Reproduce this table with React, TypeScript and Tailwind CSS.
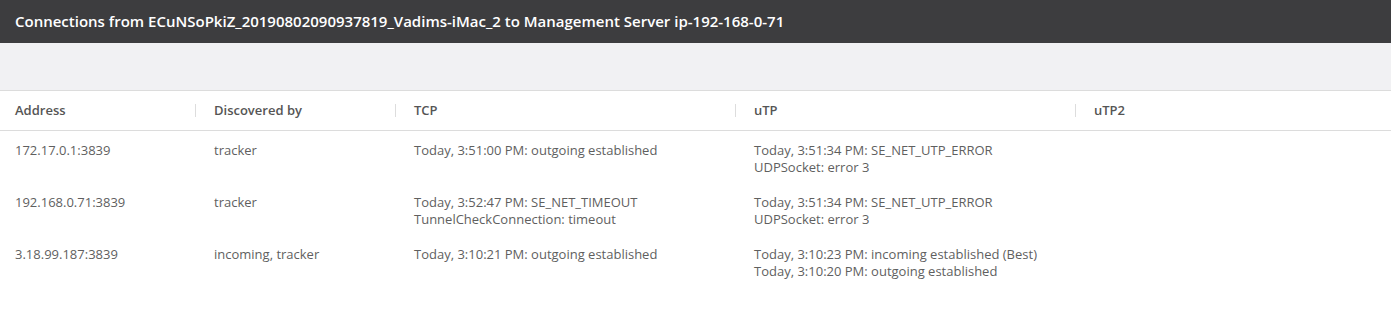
export default function App() {
  const cols = [
    { label: "Address", w: "w-[199px]" },
    { label: "Discovered by", w: "w-[200px]" },
    { label: "TCP", w: "w-[340px]" },
    { label: "uTP", w: "w-[340px]" },
    { label: "uTP2", w: "flex-1" },
  ];
  const rows: string[][][] = [
    [
      ["172.17.0.1:3839"],
      ["tracker"],
      ["Today, 3:51:00 PM: outgoing established"],
      ["Today, 3:51:34 PM: SE_NET_UTP_ERROR", "UDPSocket: error 3"],
      [],
    ],
    [
      ["192.168.0.71:3839"],
      ["tracker"],
      ["Today, 3:52:47 PM: SE_NET_TIMEOUT", "TunnelCheckConnection: timeout"],
      ["Today, 3:51:34 PM: SE_NET_UTP_ERROR", "UDPSocket: error 3"],
      [],
    ],
    [
      ["3.18.99.187:3839"],
      ["incoming, tracker"],
      ["Today, 3:10:21 PM: outgoing established"],
      ["Today, 3:10:23 PM: incoming established (Best)", "Today, 3:10:20 PM: outgoing established"],
      [],
    ],
  ];
  return (
    <div className="w-[1391px] h-[325px] bg-white font-['Open_Sans',sans-serif] overflow-hidden">
      <div className="h-[43px] bg-[#3d3d3f] flex items-center px-[15px] text-white text-[15px] font-semibold">
        Connections from ECuNSoPkiZ_20190802090937819_Vadims-iMac_2 to Management Server ip-192-168-0-71
      </div>
      <div className="h-[48px] bg-[#f1f1f3] border-b border-[#dcdcdc]"></div>
      <div className="flex h-[40px] items-center border-b border-[#dcdcdc] text-[13px] font-semibold text-[#555]">
        {cols.map((c, i) => (
          <div key={i} className={`${c.w} flex items-center justify-between pl-[15px] pr-[3px]`}>
            <span>{c.label}</span>
            {i < 4 && <span className="w-px h-[13px] bg-[#dddddd]"></span>}
          </div>
        ))}
      </div>
      {rows.map((r, ri) => (
        <div key={ri} className="flex pt-[11px] h-[52px] text-[13px] text-[#5f5f5f] leading-[17px]">
          {r.map((cell, ci) => (
            <div key={ci} className={`${cols[ci].w} pl-[15px]`}>
              {cell.map((l, li) => (
                <div key={li}>{l}</div>
              ))}
            </div>
          ))}
        </div>
      ))}
    </div>
  );
}
